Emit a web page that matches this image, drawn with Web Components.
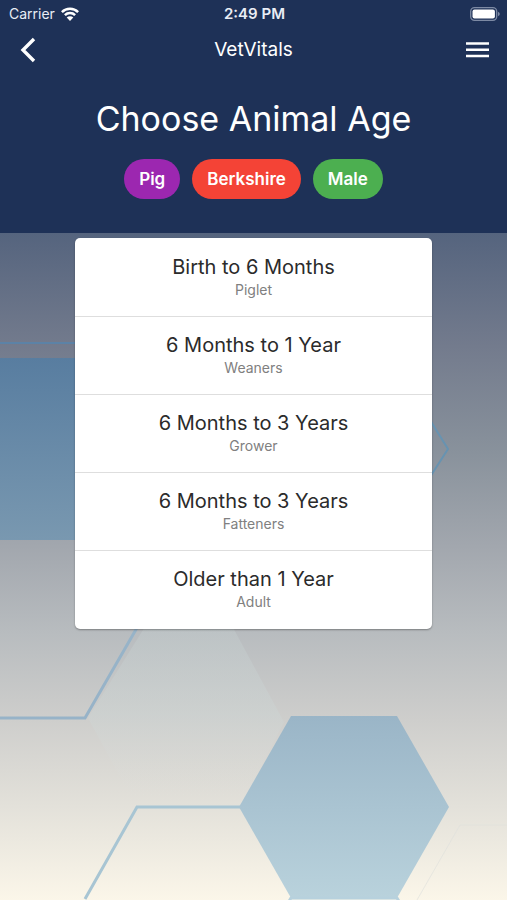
<!DOCTYPE html>
<html lang="en">
<head>
<meta charset="utf-8">
<meta name="viewport" content="width=device-width, initial-scale=1">
<title>VetVitals</title>
<style>
html, body { height: 100%; }
body { margin: 0; font-family: Inter, Roboto, "Liberation Sans", sans-serif; background: #faf5e8; }
</style>
</head>
<body>
<vet-screen>
  <status-bar slot="header" carrier="Carrier" time="2:49 PM"></status-bar>
  <nav-bar slot="header">VetVitals</nav-bar>
  <page-hero slot="header">
    <span slot="title">Choose Animal Age</span>
    <choice-chip color="#9c27b0">Pig</choice-chip>
    <choice-chip color="#f44336">Berkshire</choice-chip>
    <choice-chip color="#4caf50">Male</choice-chip>
  </page-hero>
  <option-list role="list">
    <option-row role="listitem">Birth to 6 Months<span slot="detail">Piglet</span></option-row>
    <option-row role="listitem">6 Months to 1 Year<span slot="detail">Weaners</span></option-row>
    <option-row role="listitem">6 Months to 3 Years<span slot="detail">Grower</span></option-row>
    <option-row role="listitem">6 Months to 3 Years<span slot="detail">Fatteners</span></option-row>
    <option-row role="listitem">Older than 1 Year<span slot="detail">Adult</span></option-row>
  </option-list>
</vet-screen>
<script>
const define = (name, html, setup) => customElements.define(name, class extends HTMLElement {
  constructor() {
    super();
    const t = document.createElement('template');
    t.innerHTML = html;
    this.attachShadow({ mode: 'open' }).append(t.content.cloneNode(true));
  }
  connectedCallback() { if (setup) setup(this, this.shadowRoot); }
});

define('hex-backdrop', `
<style>
:host { display: block; overflow: hidden; min-height: 0; contain: size; }
svg { display: block; width: 100%; height: 100%; }
</style>
<svg viewBox="0 233 507 667" preserveAspectRatio="xMidYMin slice" aria-hidden="true">
  <defs>
    <linearGradient id="sky" gradientUnits="userSpaceOnUse" x1="0" y1="233" x2="0" y2="900">
      <stop offset="0" stop-color="#55647e"/>
      <stop offset=".17" stop-color="#737b8d"/>
      <stop offset=".33" stop-color="#89929c"/>
      <stop offset=".47" stop-color="#a2a7ae"/>
      <stop offset=".6" stop-color="#b8bcbf"/>
      <stop offset=".73" stop-color="#cececc"/>
      <stop offset=".86" stop-color="#e3e1da"/>
      <stop offset="1" stop-color="#fbf6e9"/>
    </linearGradient>
    <linearGradient id="left" gradientUnits="userSpaceOnUse" x1="0" y1="358" x2="0" y2="540">
      <stop offset="0" stop-color="#587da0"/><stop offset="1" stop-color="#7998b0"/>
    </linearGradient>
    <linearGradient id="hex" gradientUnits="userSpaceOnUse" x1="0" y1="716" x2="0" y2="898">
      <stop offset="0" stop-color="#9ab5c7"/><stop offset="1" stop-color="#b9d2dc"/>
    </linearGradient>
    <linearGradient id="pale" gradientUnits="userSpaceOnUse" x1="0" y1="629" x2="0" y2="800">
      <stop offset="0" stop-color="#c3cccd" stop-opacity=".45"/><stop offset=".5" stop-color="#cdd5d4" stop-opacity=".45"/><stop offset="1" stop-color="#dfe0dc" stop-opacity="0"/>
    </linearGradient>
  </defs>
  <path fill="url(#sky)" d="M-600 233H1200V900H-600z"/>
  <path fill="url(#pale)" d="M148 622H230L284 722L240 806H136L88 718z"/>
  <path fill="none" stroke="#5c82a6" stroke-width="2" d="M-20 343H90"/>
  <path fill="url(#left)" d="M-20 358H90V540H-20z"/>
  <path fill="none" stroke="#6793b1" stroke-width="2" d="M430 420L448 449L430 477"/>
  <path fill="none" stroke="#97b3c8" stroke-width="3" d="M-20 718H85L138 626"/>
  <path fill="none" stroke="#a8c5d3" stroke-width="3" d="M240 807H137L85 899"/>
  <path fill="none" stroke="#dde0dc" stroke-opacity=".6" d="M520 825H460L417 900"/>
  <path fill="url(#hex)" d="M291 716H397L449 807L397 898H291L239 807z"/>
  <path fill="none" stroke="#b7d1dd" stroke-width="3" d="M288 903L291 898H397L400 903"/>
</svg>`);

define('vet-screen', `
<style>
:host { display: flex; flex-direction: column; min-height: 100vh; }
header { background: #1e3157; padding-bottom: 34px; }
main { flex: 1; display: grid; grid-template: minmax(0, 1fr) / minmax(0, 1fr); }
main > * { grid-area: 1 / 1; }
.content { padding: 5px 75px 24px; z-index: 1; }
</style>
<header><slot name="header"></slot></header>
<main><hex-backdrop></hex-backdrop><div class="content"><slot></slot></div></main>`);

define('status-bar', `
<style>
:host { display: grid; grid-template-columns: 1fr auto 1fr; align-items: center; height: 28px; padding: 0 7px 0 9px; color: #e9edf5; font-size: 14px; line-height: 28px; }
.side { display: flex; align-items: center; gap: 6px; }
.end { justify-content: flex-end; }
b { font-size: 15px; font-weight: 600; }
svg { display: block; }
</style>
<div class="side"><span id="carrier"></span>
<svg width="18" height="14" viewBox="0 0 18 14" role="img" aria-label="Wi-Fi"><g fill="none" stroke="#fff" stroke-width="2.5"><path d="M.9 5.1A11.5 11.5 0 0 1 17.1 5.1"/><path d="M3.9 8.2A7.2 7.2 0 0 1 14.1 8.2"/></g><path fill="#fff" d="M9 14L5.7 10.6A4.7 4.7 0 0 1 12.3 10.6z"/></svg></div>
<b id="time"></b>
<div class="side end">
<svg width="30" height="14" viewBox="0 0 30 14" role="img" aria-label="Battery full"><rect x=".7" y=".7" width="26" height="12.6" rx="3.8" fill="none" stroke="#7d8aa4" stroke-width="1.3"/><rect x="2.5" y="2.5" width="22.4" height="9" rx="2" fill="#fff"/><path fill="#7d8aa4" d="M28 4.7q1.8.7 1.8 2.3T28 9.3z"/></svg></div>`,
(el, root) => {
  root.getElementById('carrier').textContent = el.getAttribute('carrier');
  root.getElementById('time').textContent = el.getAttribute('time');
});

define('nav-bar', `
<style>
:host { display: grid; grid-template-columns: 1fr auto 1fr; align-items: center; height: 44px; padding: 0 8px; color: #fff; font-size: 19px; line-height: 42px; }
button { display: grid; place-items: center; width: 40px; height: 40px; padding: 0; border: 0; background: none; cursor: pointer; }
button:last-of-type { justify-self: end; width: 43px; }
</style>
<button type="button" aria-label="Back"><svg width="16" height="26" viewBox="0 0 16 26"><path fill="none" stroke="#fff" stroke-width="3.4" d="M14 2L3 13L14 24"/></svg></button>
<span><slot></slot></span>
<button type="button" aria-label="Menu"><svg width="23" height="16" viewBox="0 0 23 16"><path stroke="#fff" stroke-width="2.5" d="M0 1.4H23M0 7.7H23M0 14H23"/></svg></button>`);

define('page-hero', `
<style>
:host { display: block; padding-top: 25px; text-align: center; }
h1 { margin: 0 0 18px; color: #fff; font-size: 34px; font-weight: 400; line-height: 44px; }
.chips { display: flex; flex-wrap: wrap; justify-content: center; gap: 12px; }
</style>
<h1><slot name="title"></slot></h1>
<div class="chips"><slot></slot></div>`);

define('choice-chip', `
<style>
:host { display: block; }
button { display: block; height: 40px; padding: 0 15px; border: 0; border-radius: 20px; background: var(--chip); color: #fff; font-family: inherit; font-size: 17px; font-weight: 600; line-height: 40px; cursor: pointer; }
</style>
<button type="button"><slot></slot></button>`,
(el) => el.style.setProperty('--chip', el.getAttribute('color')));

define('option-list', `
<style>
:host { display: block; overflow: hidden; padding: 1px 0; border-radius: 5px; background: #fff; box-shadow: 0 1px 2px #0005; }
::slotted(option-row:not(:last-child)) { border-bottom: 1px solid #dedede; }
</style>
<slot></slot>`);

define('option-row', `
<style>
:host { display: block; }
button { display: flex; flex-direction: column; align-items: center; width: 100%; padding: 15px 8px 16px; border: 0; background: none; color: #2b2b2b; font-family: inherit; font-size: 20px; line-height: 26px; cursor: pointer; }
small { color: #808080; font-size: 14px; line-height: 20px; }
</style>
<button type="button"><span><slot></slot></span><small><slot name="detail"></slot></small></button>`);
</script>
</body>
</html>
